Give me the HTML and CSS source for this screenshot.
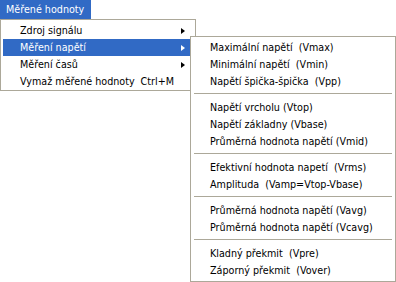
FILE: index.html
```html
<!DOCTYPE html>
<html>
<head>
<meta charset="utf-8">
<link rel="stylesheet" href="styles.css">
</head>
<body>
<div class="menubar">
  <div class="menubar-item active">Měřené hodnoty</div>
</div>
<div class="menu main-menu">
  <div class="item"><span class="label">Zdroj signálu</span><span class="arrow"></span></div>
  <div class="item hl"><span class="label">Měření napětí</span><span class="arrow"></span></div>
  <div class="item"><span class="label">Měření časů</span><span class="arrow"></span></div>
  <div class="item"><span class="label">Vymaž měřené hodnoty</span><span class="shortcut">Ctrl+M</span></div>
</div>
<div class="menu sub-menu">
  <div class="item"><span class="label">Maximální napětí  (Vmax)</span></div>
  <div class="item"><span class="label">Minimální napětí  (Vmin)</span></div>
  <div class="item"><span class="label">Napětí špička-špička  (Vpp)</span></div>
  <div class="sep"></div>
  <div class="item"><span class="label">Napětí vrcholu (Vtop)</span></div>
  <div class="item"><span class="label">Napětí základny (Vbase)</span></div>
  <div class="item"><span class="label">Průměrná hodnota napětí (Vmid)</span></div>
  <div class="sep"></div>
  <div class="item"><span class="label">Efektivní hodnota napetí  (Vrms)</span></div>
  <div class="item"><span class="label">Amplituda  (Vamp=Vtop-Vbase)</span></div>
  <div class="sep"></div>
  <div class="item"><span class="label">Průměrná hodnota napětí (Vavg)</span></div>
  <div class="item"><span class="label">Průměrná hodnota napětí (Vcavg)</span></div>
  <div class="sep"></div>
  <div class="item"><span class="label">Kladný překmit  (Vpre)</span></div>
  <div class="item"><span class="label">Záporný překmit  (Vover)</span></div>
</div>
</body>
</html>
```
FILE: styles.css
```css
html, body {
  margin: 0;
  padding: 0;
  background: #ffffff;
  font-family: "DejaVu Sans", Verdana, sans-serif;
  font-size: 9.6px;
  color: #000000;
}
.menubar {
  display: flex;
  height: 19px;
}
.menubar-item {
  box-sizing: border-box;
  padding: 0 0 0 6px;
  line-height: 19px;
  width: 91px;
  white-space: nowrap;
}
.menubar-item.active {
  background: #316ac5;
  color: #ffffff;
}
.menu {
  position: absolute;
  box-sizing: border-box;
  background: #ffffff;
  border: 1px solid #aca899;
  display: flex;
  flex-direction: column;
}
.main-menu {
  left: 0;
  top: 19px;
  width: 196px;
  height: 72px;
  padding: 2px 2px 0 2px;
}
.sub-menu {
  left: 190px;
  top: 36px;
  width: 206px;
  height: 246px;
  padding: 2px;
}
.item {
  height: 17px;
  line-height: 17px;
  display: flex;
  align-items: center;
  padding-left: 17px;
  padding-right: 8px;
  white-space: pre;
}
.item .label {
  flex: 1;
}
.item.hl {
  background: #316ac5;
  color: #ffffff;
}
.shortcut {
  margin-right: 11px;
}
.arrow {
  width: 0;
  height: 0;
  border-top: 3.5px solid transparent;
  border-bottom: 3.5px solid transparent;
  border-left: 4px solid #000000;
}
.item.hl .arrow {
  border-left-color: #ffffff;
}
.sep {
  height: 9px;
  box-sizing: border-box;
  padding-top: 3px;
  margin: 0 1px;
}
.sep::before {
  content: "";
  display: block;
  height: 1px;
  background: #aca899;
}
```
